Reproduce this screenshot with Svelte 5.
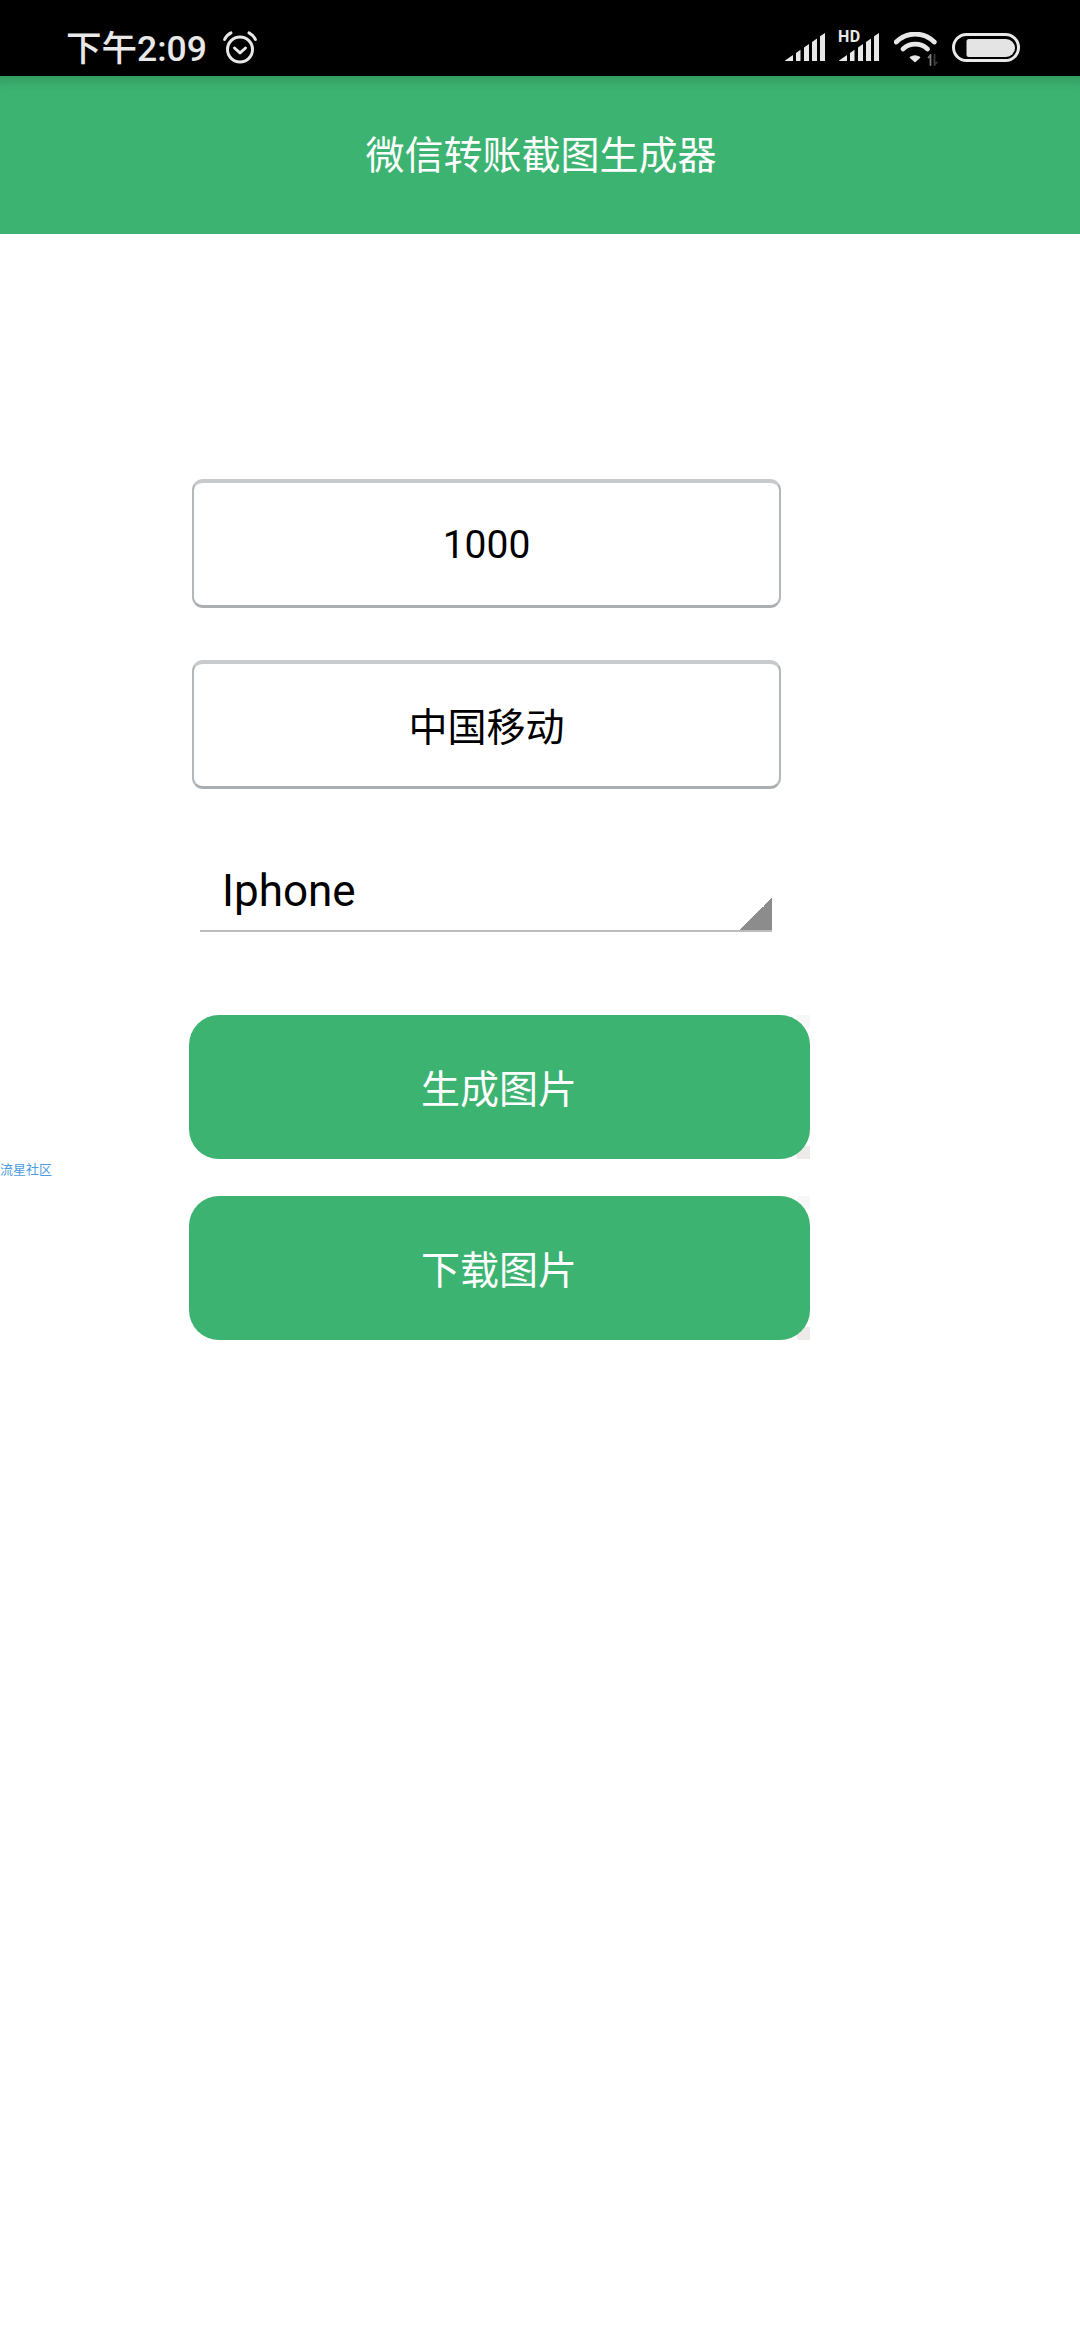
<script>
  let amount = $state('1000');
  let carrier = $state('中国移动');
  let phone = $state('Iphone');
  const barsA = [
    '0,28 0,27.5 8,22 8,28',
    '11,28 11,20 15.5,16.8 15.5,28',
    '19,28 19,14.4 24,11 24,28',
    '27,28 27,8.9 32,5.4 32,28',
    '35,28 35,3.3 40,0 40,28'
  ];
</script>

<div class="page">
  <div class="status">
    <span class="time">下午2:09</span>
    <svg class="alarm" viewBox="0 0 36 36" fill="none" stroke="#e8e8e8" stroke-width="3" stroke-linecap="round" stroke-linejoin="round">
      <circle cx="18" cy="20.500" r="12.500" />
      <path d="M12.500 19l5.500 5 5.500-5" />
      <path d="M2.600 10.500C4 7.400 6.200 5.200 9 3.800" />
      <path d="M27 3.800c2.800 1.400 5 3.600 6.400 6.700" />
    </svg>
    <div class="right">
      <svg class="signal" viewBox="0 0 40 28" fill="#e8e8e8">
        {#each barsA as p}<polygon points={p} />{/each}
      </svg>
      <div class="hd-signal">
        <span class="hd">HD</span>
        <svg class="signal" viewBox="0 0 40 28" fill="#e8e8e8">
          {#each barsA as p}<polygon points={p} />{/each}
        </svg>
      </div>
      <svg class="wifi" viewBox="0 0 44 34" fill="none" stroke="#e8e8e8" stroke-width="4.800" stroke-linecap="round">
        <path d="M2.200 10C13 -0.600 29.500 -0.600 40.300 10" />
        <path d="M9 17C16 10.600 26.500 10.600 33.500 17" />
        <path d="M16.500 25.500Q21 22.500 25.500 25.500L21 29.500Z" fill="#e8e8e8" stroke-width="1.600" stroke-linejoin="round" />
        <path d="M36.500 33V23M34.500 25.500L36.500 23" stroke="#7c7c7c" stroke-width="1.800" />
        <path d="M40.500 23V33M42.500 30.500L40.500 33" stroke="#3c3c3c" stroke-width="1.800" />
      </svg>
      <svg class="battery" viewBox="0 0 68 29">
        <rect x="1.500" y="1.500" width="65" height="26" rx="13" fill="none" stroke="#e8e8e8" stroke-width="3" />
        <path d="M17 6H54a8.500 8.500 0 0 1 0 18H17a2.500 2.500 0 0 1-2.500-2.500V8.500A2.500 2.500 0 0 1 17 6Z" fill="#e4e4e4" />
      </svg>
    </div>
  </div>

  <header class="bar">微信转账截图生成器</header>

  <main class="form">
    <input class="field latin" bind:value={amount} />
    <input class="field cjk" bind:value={carrier} />
    <div class="select-wrap">
      <select class="select" bind:value={phone}>
        <option>Iphone</option>
        <option>Android</option>
      </select>
    </div>
    <div class="shell first"><button class="btn">生成图片</button></div>
    <div class="shell"><button class="btn">下载图片</button></div>
  </main>

  <a class="side" href="#top">流星社区</a>
</div>

<style>
  :global(body) {
    margin: 0;
    background: #fff;
  }
  .page {
    position: relative;
    width: 1080px;
    height: 2340px;
    overflow: hidden;
    font-family: Roboto, "Noto Sans CJK SC", sans-serif;
  }
  .status {
    height: 76px;
    box-sizing: border-box;
    background: #000;
    display: flex;
    align-items: flex-start;
    padding-left: 66px;
    color: #e8e8e8;
  }
  .time {
    font-size: 35.5px;
    font-weight: 500;
    line-height: 36px;
    margin-top: 31px;
    white-space: nowrap;
  }
  .alarm {
    width: 36px;
    height: 36px;
    margin: 29px 0 0 15px;
  }
  .right {
    margin-left: auto;
    margin-right: 60px;
    display: flex;
    align-items: flex-start;
  }
  .signal {
    width: 40px;
    height: 28px;
    margin-top: 33px;
    display: block;
  }
  .hd-signal {
    position: relative;
    margin-left: 14px;
  }
  .hd {
    position: absolute;
    left: -1px;
    top: 31px;
    font-size: 16px;
    line-height: 12px;
    font-weight: 700;
    letter-spacing: 0.5px;
    color: #e8e8e8;
    background: #000;
    padding-right: 1px;
  }
  .wifi {
    width: 44px;
    height: 34px;
    margin: 32px 0 0 15px;
  }
  .battery {
    width: 68px;
    height: 29px;
    margin: 33px 0 0 14px;
  }
  .bar {
    height: 158px;
    box-sizing: border-box;
    padding: 3px 0 0 2px;
    background: #3cb371;
    box-shadow: inset 0 14px 12px -10px rgba(0, 0, 0, 0.18);
    color: #fff;
    font-size: 39px;
    line-height: 155px;
    text-align: center;
  }
  .form {
    display: flex;
    flex-direction: column;
    align-items: flex-start;
    padding: 245px 0 0 189px;
  }
  .field {
    display: block;
    width: 589px;
    height: 129px;
    margin: 0 0 52px 3px;
    box-sizing: border-box;
    border-style: solid;
    border-width: 4px 2px 3px;
    border-color: #c7cbcd #b4b7b9 #acafb1;
    border-radius: 11px;
    background: #fff;
    outline: none;
    padding: 0;
    text-align: center;
    font: 39px Roboto, "Noto Sans CJK SC", sans-serif;
    color: #000;
  }
  .latin {
    padding-top: 2px;
  }
  .cjk {
    padding-bottom: 3px;
  }
  .select-wrap {
    width: 572px;
    height: 75px;
    margin: 16px 0 83px 11px;
    box-sizing: border-box;
    border-bottom: 2px solid #bdbdbd;
    background: linear-gradient(to bottom right, transparent 50%, #8c8c8c 50%) no-repeat right bottom / 32px 32px;
  }
  .select {
    display: block;
    width: 100%;
    height: 67px;
    appearance: none;
    border: 0;
    outline: none;
    background: transparent;
    padding: 0 0 0 22px;
    margin: 0;
    font: 44px Roboto, "Noto Sans CJK SC", sans-serif;
    color: #000;
  }
  .shell {
    width: 621px;
    height: 144px;
    background:
      linear-gradient(#eeeaea, #eeeaea) no-repeat right bottom / 13px 13px,
      linear-gradient(#f8f7f7, #f8f7f7) no-repeat right top / 13px 13px;
  }
  .shell + .shell {
    margin-top: 37px;
  }
  .btn {
    display: block;
    width: 100%;
    height: 100%;
    border: 0;
    border-radius: 30px;
    background: #3cb371;
    color: #fff;
    font: 39px Roboto, "Noto Sans CJK SC", sans-serif;
    padding: 0 1px 3px 0;
  }
  .side {
    position: absolute;
    left: 0;
    top: 1163px;
    font-size: 13px;
    line-height: 14px;
    color: #4a9be0;
    text-decoration: none;
  }
</style>
